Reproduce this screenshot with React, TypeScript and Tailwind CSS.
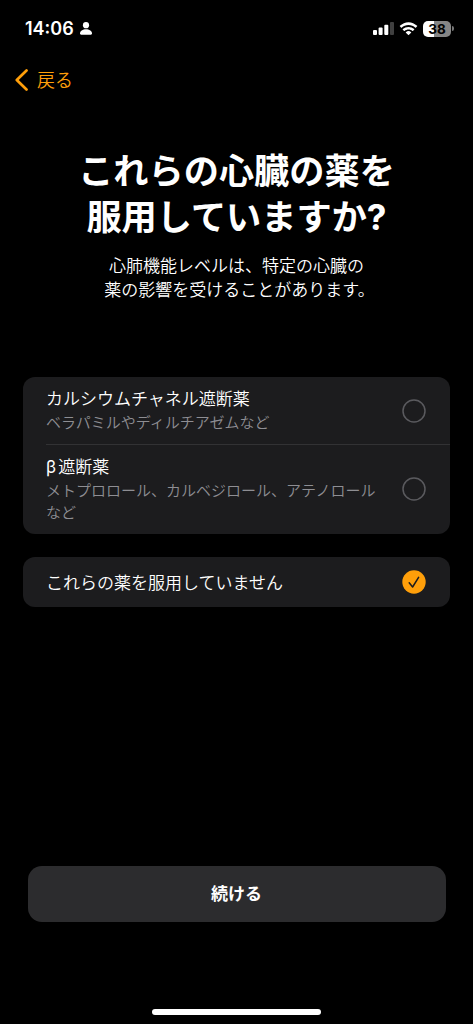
import React from "react";

const options = [
  {
    title: "カルシウムチャネル遮断薬",
    description: "ベラパミルやディルチアゼムなど",
  },
  {
    title: (
      <>
        <span className="mr-[2px] font-normal">β</span>遮断薬
      </>
    ),
    description: "メトプロロール、カルベジロール、アテノロールなど",
  },
];

const StatusBar = () => {
  return (
    <div className="flex h-14 items-center justify-between pl-[25px] pr-[19px] pt-px text-white">
      <div className="flex items-center gap-[6px]">
        <span className="font-['Inter'] text-[18px] font-semibold leading-none">
          14:06
        </span>
        <svg width="12" height="13" viewBox="0 0 12 13" fill="currentColor">
          <circle cx="6" cy="3.2" r="3.1" />
          <path d="M0 11.6C0 9 2.7 7.3 6 7.3s6 1.7 6 4.3c0 .7-.4 1.1-1.2 1.1H1.2C.4 12.7 0 12.3 0 11.6z" />
        </svg>
      </div>
      <div className="flex items-center gap-[5px]">
        <svg width="21" height="13" viewBox="0 0 21 13" fill="currentColor">
          <rect x="0" y="8" width="4" height="5" rx="1" />
          <rect x="5.6" y="5.5" width="4" height="7.5" rx="1" />
          <rect x="11.3" y="2.7" width="4" height="10.3" rx="1" />
          <rect x="17" y="0" width="4" height="13" rx="1" opacity=".25" />
        </svg>
        <svg width="19" height="14" viewBox="0 0 18 13" fill="currentColor">
          <path d="M9 2.7c2.5 0 4.8 1 6.5 2.6.1.1.3.1.4 0l1.3-1.3c.1-.1.1-.3 0-.5C14.9 1.3 12 0 9 0S3.1 1.3.8 3.5c-.1.2-.1.4 0 .5l1.3 1.3c.1.1.3.1.4 0C4.2 3.7 6.5 2.7 9 2.7z" />
          <path d="M9 7c1.4 0 2.7.5 3.7 1.4.1.1.3.1.4 0l1.3-1.3c.1-.1.1-.3 0-.5a8 8 0 0 0-10.8 0c-.1.2-.1.4 0 .5l1.300 1.300c.1.1.3.1.4 0C6.3 7.5 7.6 7 9 7z" />
          <path d="M11.5 10c.1-.2.1-.3 0-.5a3.900 3.900 0 0 0-5 0c-.1.2-.1.3 0 .5L8.800 12.300c.1.1.3.1.4 0z" />
        </svg>
        <div className="flex items-center gap-px">
          <div className="h-4 w-7 rounded-[5px] bg-linear-to-r from-white from-38% to-[#858585] to-38% text-center font-['Inter'] text-[13.5px] font-bold leading-4 text-black">
            38
          </div>
          <div className="h-[5px] w-[2px] rounded-r-full bg-[#777]" />
        </div>
      </div>
    </div>
  );
};

const App = () => {
  return (
    <main
      lang="ja"
      className="flex h-screen flex-col bg-black font-['Inter','Noto_Sans_CJK_JP',sans-serif] text-white"
    >
      <StatusBar />
      <nav className="flex h-12 items-center gap-[9px] pl-[15px] text-[#ff9f0a]">
        <svg
          width="13"
          height="22"
          viewBox="0 0 13 22"
          fill="none"
          stroke="currentColor"
          strokeWidth="2.7"
          strokeLinecap="round"
          strokeLinejoin="round"
        >
          <path d="M11.5 1.5 1.8 11l9.7 9.5" />
        </svg>
        <span className="pt-px text-[18px] font-[350]">戻る</span>
      </nav>
      <h1 className="mt-[44px] text-center text-[35.2px] font-bold leading-[46px]">
        これらの心臓の薬を
        <br />
        服用していますか?
      </h1>
      <p className="mt-[14px] text-center text-[17px] font-[350] leading-6">
        心肺機能レベルは、特定の心臓の
        <br />
        <span className="inline-block pl-[6px]">
          薬の影響を受けることがあります。
        </span>
      </p>
      <section className="mx-[23px] mt-[75px] rounded-xl bg-[#1c1c1e]">
        {options.map((option, index) => (
          <div key={index} className="flex pl-[23px]">
            <div
              className={`flex flex-1 items-center justify-between pr-6 ${
                index === 0 ? "h-[68px] border-b border-[#323234]" : "h-[88.5px]"
              }`}
            >
              <div className="w-[332px]">
                <h2 className="mb-px text-[17px] font-[350] leading-6">
                  {option.title}
                </h2>
                <p className="text-[15px] font-[350] leading-[22px] text-[#8e8e93]">
                  {option.description}
                </p>
              </div>
              <svg
                width="24"
                height="24"
                viewBox="0 0 24 24"
                fill="none"
                className="shrink-0"
              >
                <circle
                  cx="12"
                  cy="12"
                  r="11"
                  stroke="#5a5a5e"
                  strokeWidth="1.5"
                />
              </svg>
            </div>
          </div>
        ))}
      </section>
      <section className="mx-[23px] mt-[23.5px] flex h-[50px] items-center justify-between rounded-xl bg-[#1c1c1e] pl-[23px] pr-6">
        <span className="pt-[3px] text-[17px] font-[350]">
          これらの薬を服用していません
        </span>
        <svg width="24" height="24" viewBox="0 0 24 24" fill="none">
          <circle cx="12" cy="12" r="11.7" fill="#ff9f0a" />
          <path
            d="m7.2 12.8 3.4 4.2 6-9.6"
            stroke="#1c1c1e"
            strokeWidth="1.5"
            strokeLinecap="round"
            strokeLinejoin="round"
          />
        </svg>
      </section>
      <button className="mx-[27.5px] mt-auto h-14 shrink-0 rounded-[14px] bg-[#2c2c2e] pt-[2px] text-[17px] font-bold">
        続ける
      </button>
      <div className="mx-auto mb-[9px] mt-[87px] h-[6px] w-[169px] shrink-0 rounded-full bg-white" />
    </main>
  );
};

export default App;
